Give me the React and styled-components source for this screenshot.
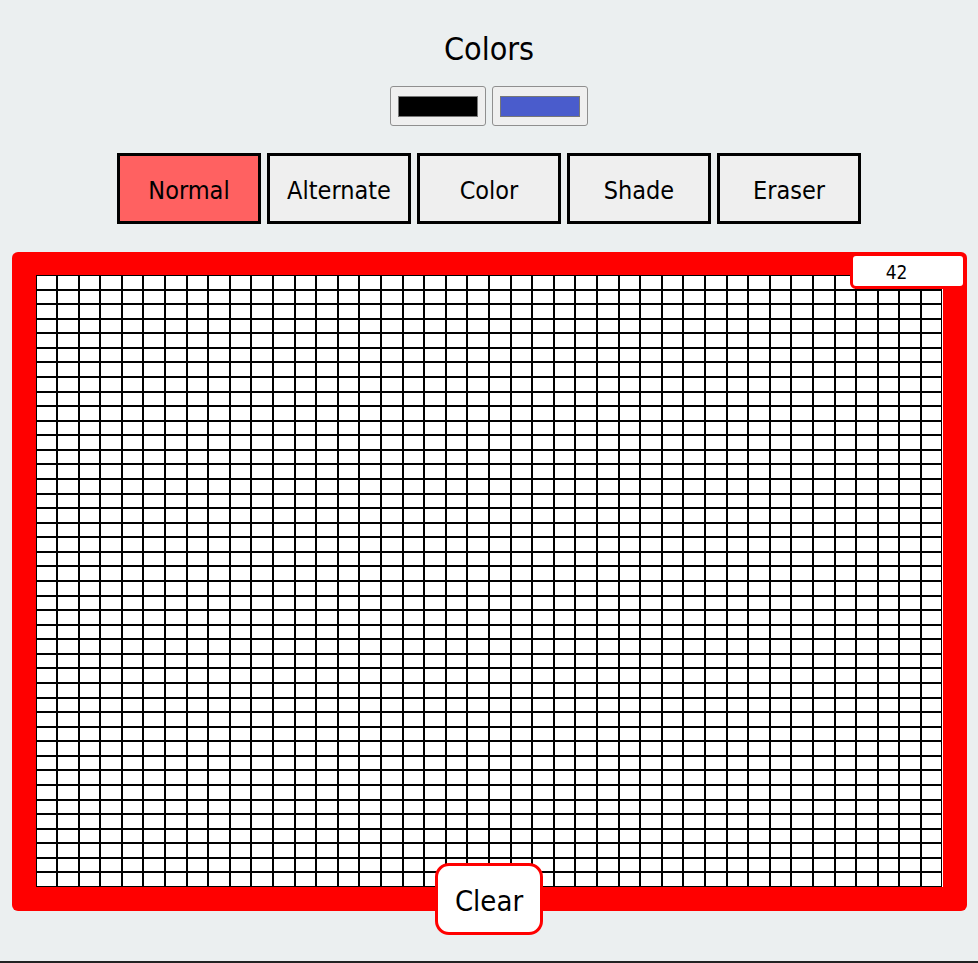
import React, { useState } from "react";
import styled, { createGlobalStyle } from "styled-components";

const GRID = 42;

const GlobalStyle = createGlobalStyle`
  html, body {
    margin: 0;
    padding: 0;
    background: #ebeff0;
  }
  body {
    font-family: "DejaVu Sans Condensed", "Liberation Sans Narrow", "Noto Sans", sans-serif;
  }
`;

function App() {
  const [mode, setMode] = useState("Normal");
  const [size] = useState(GRID);
  const modes = ["Normal", "Alternate", "Color", "Shade", "Eraser"];
  const cells = [];
  for (let i = 0; i < size * size; i++) {
    cells.push(<Cell key={i} />);
  }

  return (
    <Page>
      <GlobalStyle />
      <Title>Colors</Title>
      <SwatchRow>
        <Swatch>
          <SwatchColor color="#000000" />
        </Swatch>
        <Swatch>
          <SwatchColor color="#4a5ccc" />
        </Swatch>
      </SwatchRow>
      <ModeRow>
        {modes.map((m) => (
          <ModeButton key={m} $active={m === mode} onClick={() => setMode(m)}>
            {m}
          </ModeButton>
        ))}
      </ModeRow>
      <Frame>
        <SizeInput value={size} readOnly />
        <Grid $size={size}>{cells}</Grid>
        <ClearButton>Clear</ClearButton>
      </Frame>
    </Page>
  );
}

export default App;

const Page = styled.div`
  height: 963px;
  border-bottom: 2px solid #222;
  box-sizing: border-box;
  display: flex;
  flex-direction: column;
  align-items: center;
  padding: 27px 11px 0 11px;
`;

const Title = styled.h1`
  margin: 0;
  font-size: 32px;
  font-weight: 400;
  line-height: 44px;
  color: #000;
`;

const SwatchRow = styled.div`
  display: flex;
  gap: 6px;
  margin-top: 15px;
`;

const Swatch = styled.button`
  width: 96px;
  height: 40px;
  padding: 0;
  background: #efefef;
  border: 1px solid #8f8f8f;
  border-radius: 3px;
  display: flex;
  align-items: center;
  justify-content: center;
`;

const SwatchColor = styled.div`
  width: 80px;
  height: 21px;
  box-sizing: border-box;
  border: 1px solid #777;
  background: ${(p) => p.color};
`;

const ModeRow = styled.div`
  display: flex;
  gap: 6px;
  margin-top: 27px;
`;

const ModeButton = styled.button`
  width: 144px;
  height: 71px;
  box-sizing: border-box;
  border: 3px solid #000;
  padding: 4px 0 0 0;
  background: ${(p) => (p.$active ? "#ff6161" : "#efefef")};
  font-family: inherit;
  font-size: 25px;
  color: #000;
  cursor: pointer;
`;

const Frame = styled.div`
  position: relative;
  margin-top: 28px;
  width: 955px;
  height: 659px;
  box-sizing: border-box;
  background: #ff0000;
  border-radius: 6px;
  padding: 23px 24px 24px 24px;
`;

const Grid = styled.div`
  width: 907px;
  height: 612px;
  display: grid;
  grid-template-columns: repeat(${(p) => p.$size}, 1fr);
  grid-template-rows: repeat(${(p) => p.$size}, 1fr);
  background: #fff;
`;

const Cell = styled.div`
  border: 1px solid #000;
  background: #fff;
`;

const SizeInput = styled.input`
  position: absolute;
  top: 1px;
  right: 1px;
  width: 116px;
  height: 36px;
  box-sizing: border-box;
  border: 3px solid #ff0000;
  border-radius: 6px;
  background: #fff;
  padding: 2px 22px 0 0;
  text-align: center;
  font-family: inherit;
  font-size: 19px;
  color: #000;
  outline: none;
`;

const ClearButton = styled.button`
  position: absolute;
  left: 50%;
  bottom: -24px;
  transform: translateX(-50%);
  width: 108px;
  height: 72px;
  box-sizing: border-box;
  border: 3px solid #ff0000;
  border-radius: 14px;
  background: #fff;
  padding: 3px 0 0 0;
  font-family: inherit;
  font-size: 29px;
  color: #000;
  cursor: pointer;
`;
